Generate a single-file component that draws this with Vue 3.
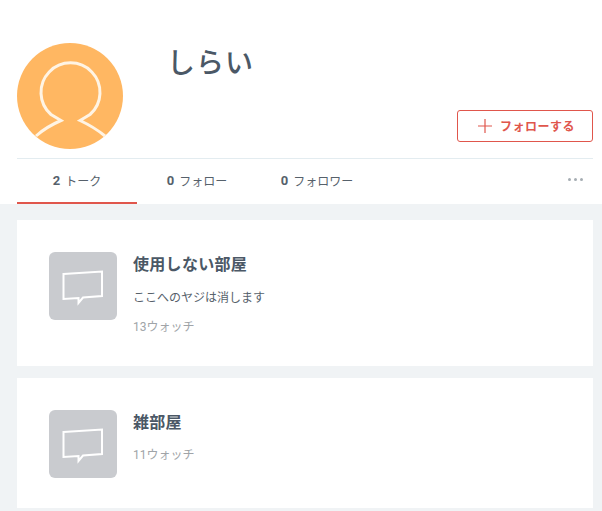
<script setup>
const tabs = [
  { n: 2, label: 'トーク', active: true },
  { n: 0, label: 'フォロー' },
  { n: 0, label: 'フォロワー' },
]
const rooms = [
  { title: '使用しない部屋', desc: 'ここへのヤジは消します', watch: '13ウォッチ' },
  { title: '雑部屋', desc: '', watch: '11ウォッチ' },
]
</script>

<template>
  <div class="page">
    <header class="head">
      <div class="profile">
        <svg class="avatar" viewBox="0 0 106 106" width="106" height="106">
          <circle cx="53" cy="53" r="53" fill="#ffb762" />
          <path d="M19 93 Q29 84 44 77.500 L34 71.500 A29.500 29.500 0 1 1 73 71.500 L63 77.500 Q77 84 88 93" fill="none" stroke="#fff4e4" stroke-width="3" stroke-linejoin="miter" />
        </svg>
        <div class="info">
          <h1 class="name">しらい</h1>
          <button class="follow">
            <svg class="plus" viewBox="0 0 14 14" width="14" height="14">
              <path d="M7 0V14M0 7H14" stroke="#e0564c" stroke-width="1.2" fill="none" />
            </svg>
            <span>フォローする</span>
          </button>
        </div>
      </div>
      <nav class="tabs">
        <div v-for="t in tabs" :key="t.label" class="tab" :class="{ active: t.active }">
          <b>{{ t.n }}</b><span>{{ t.label }}</span>
        </div>
        <div class="more"><i></i><i></i><i></i></div>
      </nav>
    </header>
    <main class="list">
      <article v-for="r in rooms" :key="r.title" class="card">
        <div class="thumb">
          <svg viewBox="0 0 42 36" width="42" height="36">
            <path d="M1.500 4 L40 1.500 V26 L21 27.500 L16.500 33 V28 L1.500 29 Z" fill="none" stroke="#fff" stroke-width="2" />
          </svg>
        </div>
        <div class="body">
          <h2>{{ r.title }}</h2>
          <p v-if="r.desc" class="desc">{{ r.desc }}</p>
          <p class="watch">{{ r.watch }}</p>
        </div>
      </article>
    </main>
  </div>
</template>

<style>
html, body { margin: 0; background: #f0f3f5; }
</style>

<style scoped>
.page {
  width: 602px;
  height: 511px;
  overflow: hidden;
  background: #f0f3f5;
  font-family: Roboto, "Noto Sans CJK JP", sans-serif;
  color: #4b5866;
}
.head {
  background: #fff;
  padding: 43px 9px 0 17px;
  height: 161px;
}
.profile {
  display: flex;
  height: 115px;
  border-bottom: 1px solid #e3ecf0;
}
.avatar { flex: none; display: block; }
.info {
  flex: 1;
  display: flex;
  justify-content: space-between;
  align-items: flex-start;
  padding-left: 44px;
}
.name {
  margin: 2px 0 0;
  font-size: 28px;
  line-height: 38px;
  font-weight: 500;
  letter-spacing: 1px;
}
.follow {
  margin-top: 67px;
  width: 136px;
  height: 32px;
  box-sizing: border-box;
  border: 1px solid #e0564c;
  border-radius: 3px;
  background: #fff;
  color: #e0564c;
  font: 700 12px Roboto, "Noto Sans CJK JP", sans-serif;
  letter-spacing: 0.5px;
  display: flex;
  align-items: center;
  justify-content: center;
  gap: 8px;
  padding: 0 0 0 3px;
}
.follow span { margin-bottom: 2px; }
.tabs {
  display: flex;
  height: 45px;
}
.tab {
  width: 120px;
  height: 45px;
  box-sizing: border-box;
  display: flex;
  align-items: center;
  justify-content: center;
  gap: 5px;
  font-size: 12px;
  padding-bottom: 1px;
  border-bottom: 2px solid transparent;
  color: #56616b;
}
.tab b { font-size: 13px; font-weight: 700; }
.tab.active { border-bottom-color: #e0564c; }
.more {
  margin-left: auto;
  margin-right: 10px;
  display: flex;
  gap: 3px;
  height: 41px;
  align-items: center;
}
.more i {
  width: 3px;
  height: 3px;
  border-radius: 50%;
  background: #a6adb3;
}
.list {
  padding: 16px 9px 0 17px;
  display: flex;
  flex-direction: column;
  gap: 12px;
}
.card {
  background: #fff;
  padding: 32px;
  display: flex;
  gap: 16px;
  box-sizing: border-box;
}
.card:first-child { height: 146px; }
.card:last-child { height: 130px; }
.thumb {
  width: 68px;
  height: 68px;
  flex: none;
  border-radius: 6px;
  background: #c9cbcf;
  display: flex;
  align-items: center;
  justify-content: center;
}
.thumb svg { margin-top: 3px; }
.body { padding-top: 1px; }
.body h2 {
  margin: 0;
  font-size: 16px;
  line-height: 24px;
  font-weight: 700;
  letter-spacing: 0.3px;
  color: #4b5866;
}
.desc {
  margin: 11px 0 0;
  font-size: 12px;
  line-height: 20px;
  color: #56616b;
}
.watch {
  margin: 10px 0 0;
  font-size: 12px;
  line-height: 20px;
  color: #a0a4a8;
}
.desc + .watch { margin-top: 9px; }
</style>
